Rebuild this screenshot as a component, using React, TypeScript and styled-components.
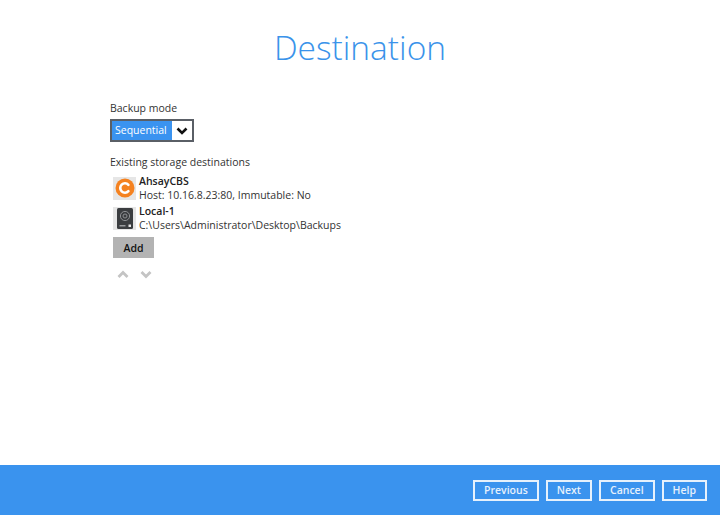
import { FC } from "react";
import styled, { createGlobalStyle } from "styled-components";

const GlobalStyle = createGlobalStyle`
  html, body {
    margin: 0;
    padding: 0;
    background: #fff;
    font-family: "Open Sans", "Noto Sans", sans-serif;
  }
`;

interface IDestination {
  name: string;
  detail: string;
  icon: "cbs" | "local";
}

const destinations: IDestination[] = [
  { name: "AhsayCBS", detail: "Host: 10.16.8.23:80, Immutable: No", icon: "cbs" },
  {
    name: "Local-1",
    detail: "C:\\Users\\Administrator\\Desktop\\Backups",
    icon: "local",
  },
];

const CbsIcon = () => (
  <svg width="20" height="20" viewBox="0 0 20 20">
    <circle cx="10" cy="10" r="9.5" fill="#f58220" />
    <path
      d="M13.4 6.8 A4.7 4.7 0 1 0 13.4 13.2"
      fill="none"
      stroke="#fff"
      strokeWidth="2.6"
      strokeLinecap="round"
    />
  </svg>
);

const LocalIcon = () => (
  <svg width="16" height="21" viewBox="0 0 16 21">
    <rect width="16" height="21" rx="1.5" fill="#3b3d40" />
    <circle cx="8" cy="8" r="4.6" fill="none" stroke="#8d8f92" strokeWidth="1" />
    <circle cx="8" cy="8" r="2" fill="none" stroke="#8d8f92" strokeWidth="1" />
    <rect x="2.5" y="17" width="6" height="1.5" fill="#9a9c9e" />
    <rect x="11.5" y="16.5" width="2.5" height="2.5" fill="#e4e4e4" />
  </svg>
);

const Chevron: FC<{ up?: boolean }> = ({ up }) => (
  <svg width="12" height="9" viewBox="0 0 12 9">
    <path
      d={up ? "M1.5 7 L6 2.5 L10.5 7" : "M1.5 2 L6 6.5 L10.5 2"}
      fill="none"
      stroke="#c4c4c4"
      strokeWidth="2.8"
    />
  </svg>
);

const App = () => (
  <StyledPage>
    <GlobalStyle />
    <StyledMain>
      <StyledTitle>Destination</StyledTitle>
      <StyledLabel>Backup mode</StyledLabel>
      <StyledSelect>
        <StyledSelectValue>Sequential</StyledSelectValue>
        <StyledSelectArrow>
          <svg width="12" height="8" viewBox="0 0 12 8">
            <path
              d="M1.5 1.5 L6 6 L10.5 1.5"
              fill="none"
              stroke="#111"
              strokeWidth="2.6"
            />
          </svg>
        </StyledSelectArrow>
      </StyledSelect>
      <StyledSectionLabel>Existing storage destinations</StyledSectionLabel>
      <StyledList>
        {destinations.map(({ name, detail, icon }) => (
          <StyledRow key={name}>
            <StyledIconBox>
              {icon === "cbs" ? <CbsIcon /> : <LocalIcon />}
            </StyledIconBox>
            <div>
              <StyledName>{name}</StyledName>
              <StyledDetail>{detail}</StyledDetail>
            </div>
          </StyledRow>
        ))}
      </StyledList>
      <StyledAddButton>Add</StyledAddButton>
      <StyledArrows>
        <Chevron up />
        <Chevron />
      </StyledArrows>
    </StyledMain>
    <StyledFooter>
      <StyledFooterButton>Previous</StyledFooterButton>
      <StyledFooterButton>Next</StyledFooterButton>
      <StyledFooterButton>Cancel</StyledFooterButton>
      <StyledFooterButton>Help</StyledFooterButton>
    </StyledFooter>
  </StyledPage>
);

const StyledPage = styled.div`
  display: flex;
  flex-direction: column;
  width: 720px;
  height: 515px;
  overflow: hidden;
`;

const StyledMain = styled.main`
  flex: 1;
  display: flex;
  flex-direction: column;
  align-items: flex-start;
  padding: 0 110px;
`;

const StyledTitle = styled.h1`
  align-self: center;
  margin: 24px 0 0;
  font-size: 33.5px;
  line-height: 46px;
  font-weight: 300;
  color: #3a93ea;
`;

const StyledLabel = styled.div`
  margin-top: 30px;
  font-size: 10.5px;
  line-height: 16px;
  color: #333;
`;

const StyledSectionLabel = styled(StyledLabel)`
  margin-top: 12px;
`;

const StyledSelect = styled.div`
  display: flex;
  box-sizing: border-box;
  width: 84px;
  height: 23px;
  margin-top: 3px;
  border: 2px solid #5a5f66;
`;

const StyledSelectValue = styled.div`
  flex: 1;
  padding-left: 3px;
  background: #3a93f0;
  color: #fff;
  font-size: 10.5px;
  line-height: 19px;
`;

const StyledSelectArrow = styled.div`
  display: flex;
  align-items: center;
  justify-content: center;
  width: 20px;
  background: #fff;
`;

const StyledList = styled.div`
  display: flex;
  flex-direction: column;
  gap: 2px;
  margin-top: 4px;
`;

const StyledRow = styled.div`
  display: flex;
  align-items: center;
  gap: 3px;
  padding-left: 3px;
`;

const StyledIconBox = styled.div`
  display: flex;
  align-items: center;
  justify-content: center;
  width: 23px;
  height: 23px;
  background: #e6e6e6;
`;

const StyledName = styled.div`
  font-size: 10.5px;
  line-height: 14px;
  font-weight: 600;
  color: #222;
`;

const StyledDetail = styled.div`
  font-size: 10.5px;
  line-height: 14px;
  color: #333;
`;

const StyledAddButton = styled.button`
  width: 41px;
  height: 21px;
  margin: 5px 0 0 3px;
  padding: 0;
  border: 0;
  background: #b3b3b3;
  color: #111;
  font-family: inherit;
  font-size: 10.5px;
  font-weight: 600;
`;

const StyledArrows = styled.div`
  display: flex;
  gap: 11px;
  margin: 12px 0 0 7px;
`;

const StyledFooter = styled.footer`
  display: flex;
  justify-content: flex-end;
  align-items: flex-start;
  gap: 7px;
  height: 50px;
  box-sizing: border-box;
  padding: 15px 13px 0 0;
  background: #3a93ee;
`;

const StyledFooterButton = styled.button`
  height: 21px;
  padding: 0 9px;
  border: 2px solid #e6f1fc;
  background: transparent;
  color: #e6f1fc;
  font-family: inherit;
  font-size: 10.5px;
  font-weight: 600;
  line-height: 17px;
`;

export default App;
